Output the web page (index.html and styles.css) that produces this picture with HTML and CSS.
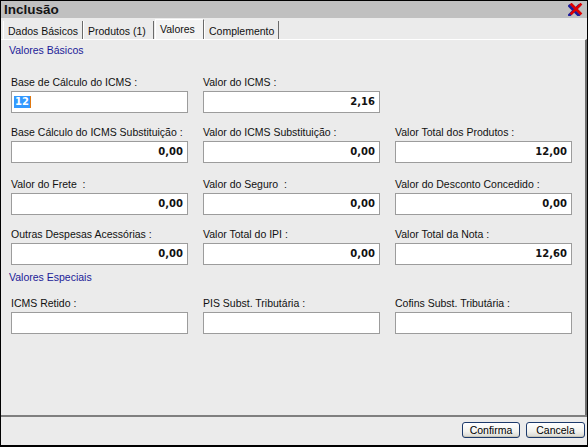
FILE: index.html
```html
<!DOCTYPE html>
<html lang="pt">
<head>
<meta charset="utf-8">
<title>Inclusão</title>
<link rel="stylesheet" href="styles.css">
</head>
<body>
<div class="window">
  <div class="titlebar">
    <span class="title">Inclusão</span>
    <svg class="close" width="15" height="13" viewBox="0 0 15 13" aria-label="Fechar">
      <path d="M1.5 3 L10.5 12 M10.5 3 L1.5 12" stroke="#1c1c9a" stroke-width="3" stroke-linecap="square" fill="none"/>
      <path d="M3.5 1.5 L12.5 10.5 M12.5 1.5 L3.5 10.5" stroke="#e00000" stroke-width="2.6" stroke-linecap="square" fill="none"/>
    </svg>
  </div>
  <div class="tabs">
    <div class="tab tab-dados">Dados Básicos</div>
    <div class="tab tab-produtos">Produtos (1)</div>
    <div class="tab tab-valores active">Valores</div>
    <div class="tab tab-complemento">Complemento</div>
  </div>
  <div class="panel">
    <div class="section">Valores Básicos</div>
    <div class="grid grid-basic">
      <div class="field">
        <div class="label">Base de Cálculo do ICMS :</div>
        <div class="input editing"><span class="sel">12</span><span class="caret"></span></div>
      </div>
      <div class="field">
        <div class="label">Valor do ICMS :</div>
        <div class="input">2,16</div>
      </div>
      <div class="field empty"></div>

      <div class="field">
        <div class="label">Base Cálculo do ICMS Substituição :</div>
        <div class="input">0,00</div>
      </div>
      <div class="field">
        <div class="label">Valor do ICMS Substituição :</div>
        <div class="input">0,00</div>
      </div>
      <div class="field">
        <div class="label">Valor Total dos Produtos :</div>
        <div class="input">12,00</div>
      </div>

      <div class="field shift">
        <div class="label">Valor do Frete &nbsp;:</div>
        <div class="input">0,00</div>
      </div>
      <div class="field shift">
        <div class="label">Valor do Seguro &nbsp;:</div>
        <div class="input">0,00</div>
      </div>
      <div class="field shift">
        <div class="label">Valor do Desconto Concedido :</div>
        <div class="input">0,00</div>
      </div>

      <div class="field">
        <div class="label">Outras Despesas Acessórias :</div>
        <div class="input">0,00</div>
      </div>
      <div class="field">
        <div class="label">Valor Total do IPI :</div>
        <div class="input">0,00</div>
      </div>
      <div class="field">
        <div class="label">Valor Total da Nota :</div>
        <div class="input">12,60</div>
      </div>
    </div>

    <div class="section section-especiais">Valores Especiais</div>
    <div class="grid grid-especiais">
      <div class="field">
        <div class="label">ICMS Retido :</div>
        <div class="input"></div>
      </div>
      <div class="field">
        <div class="label">PIS Subst. Tributária :</div>
        <div class="input"></div>
      </div>
      <div class="field">
        <div class="label">Cofins Subst. Tributária :</div>
        <div class="input"></div>
      </div>
    </div>
  </div>
  <div class="footer">
    <button class="btn btn-confirma">Confirma</button>
    <button class="btn btn-cancela">Cancela</button>
  </div>
</div>
</body>
</html>
```
FILE: styles.css
```css
* { box-sizing: border-box; }
html, body { margin: 0; padding: 0; }
body {
  width: 588px;
  height: 447px;
  overflow: hidden;
  font-family: "Liberation Sans", Arial, sans-serif;
  font-size: 10.5px;
  color: #111;
  background: #ebebeb;
}
.window {
  width: 588px;
  height: 447px;
  display: flex;
  flex-direction: column;
  border-top: 1px solid #000;
  border-left: 1px solid #000;
  border-right: 1px solid #000;
  border-bottom: 2px solid #000;
  background: #ebebeb;
}
.titlebar {
  height: 17px;
  flex: none;
  background: #c0c0c0;
  display: flex;
  align-items: flex-start;
  justify-content: space-between;
  padding-left: 3px;
  padding-right: 4px;
}
.title {
  font-weight: bold;
  font-size: 13.5px;
  line-height: 17px;
  color: #141414;
}
.close { margin-top: 2px; display: block; }

.tabs {
  height: 21px;
  flex: none;
  display: flex;
  align-items: flex-end;
  padding-left: 2px;
}
.tab {
  height: 18px;
  line-height: 20px;
  padding-left: 4px;
  border-left: 1px solid #fff;
  border-right: 1px solid #6a6a6a;
  white-space: nowrap;
  overflow: hidden;
  color: #111;
}
.tab-dados { width: 80px; }
.tab-produtos { width: 71px; }
.tab-valores { width: 49px; margin-left: 1px; }
.tab-complemento { width: 75px; }
.tab.active {
  height: 20px;
  line-height: 18px;
  background: #f3f3f3;
  border-top: 1px solid #fff;
}

.panel {
  flex: 1;
  border-top: 1px solid #fff;
  border-right: 2px solid #6e6e6e;
  padding: 4px 0 0 8px;
}
.section {
  color: #1b1b98;
  line-height: 13px;
  height: 13px;
}
.section-especiais { margin-top: 6px; }
.grid {
  display: grid;
  grid-template-columns: repeat(3, 177px);
  column-gap: 15px;
  row-gap: 13px;
  margin-left: 2px;
}
.grid-basic { margin-top: 19px; }
.grid-especiais { margin-top: 13px; }
.field.shift { margin-top: 2px; }
.label {
  line-height: 13px;
  height: 13px;
  margin-bottom: 2px;
  white-space: nowrap;
  color: #111;
}
.input {
  height: 22px;
  background: #fff;
  border: 1px solid #9c9c9c;
  text-align: right;
  padding: 0 4px 0 2px;
  font-family: "DejaVu Sans", Verdana, sans-serif;
  font-weight: bold;
  font-size: 10px;
  line-height: 20px;
  color: #111;
}
.input.editing {
  text-align: left;
  display: flex;
  align-items: center;
  padding-left: 2px;
}
.sel {
  background: #3399ff;
  color: #fff;
  line-height: 12px;
  height: 12px;
  padding: 0 1px;
}
.caret {
  width: 1px;
  height: 12px;
  background: #e07810;
}

.footer {
  height: 30px;
  flex: none;
  border-top: 2px solid #7f7f7f;
  display: flex;
  justify-content: flex-end;
  align-items: flex-start;
  gap: 6px;
  padding: 5px 2px 0 0;
}
.btn {
  height: 16px;
  margin: 0;
  padding: 0;
  font-family: "Liberation Sans", Arial, sans-serif;
  font-size: 10.5px;
  line-height: 13px;
  color: #000;
  border: 1px solid #1d3a6b;
  border-radius: 3px;
  background: linear-gradient(#ffffff, #f2f2ee 60%, #d8d8d2);
  box-shadow: inset 0 -1px 0 #c9c6b8;
}
.btn-confirma { width: 58px; }
.btn-cancela { width: 59px; }
```
